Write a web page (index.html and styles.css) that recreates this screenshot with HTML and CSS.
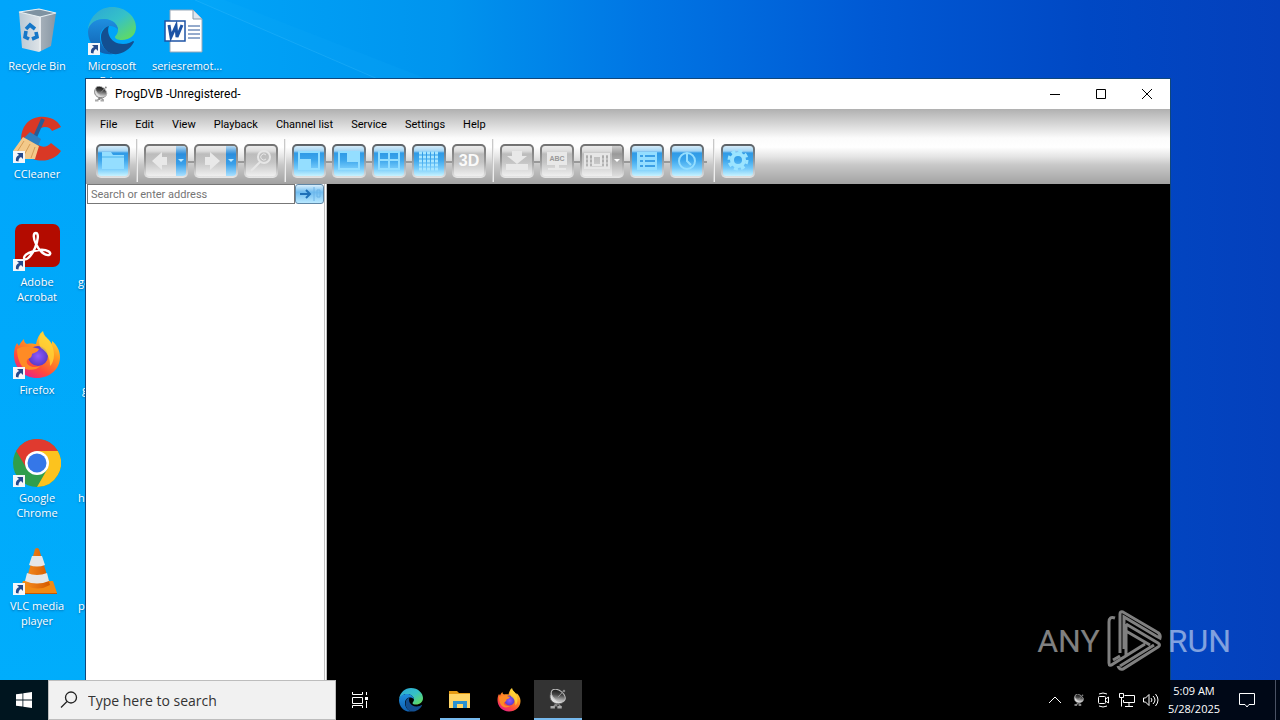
FILE: index.html
```html
<!DOCTYPE html>
<html lang="en">
<head>
<meta charset="utf-8">
<title>ProgDVB</title>
<link rel="stylesheet" href="styles.css">
</head>
<body>
<svg class="defs" aria-hidden="true">
  <defs>
    <linearGradient id="edgeTop" x1="0" y1="0" x2="1" y2="1"><stop offset="0" stop-color="#2aa5d8"/><stop offset=".5" stop-color="#35c1c8"/><stop offset="1" stop-color="#6be04a"/></linearGradient>
    <linearGradient id="edgeLeft" x1="0" y1="0" x2="0" y2="1"><stop offset="0" stop-color="#1f8fe0"/><stop offset="1" stop-color="#0f5fae"/></linearGradient>
    <linearGradient id="ffBody" x1=".9" y1="0" x2=".3" y2="1"><stop offset="0" stop-color="#fff04a"/><stop offset=".4" stop-color="#ff9a1f"/><stop offset=".75" stop-color="#ff4b3a"/><stop offset="1" stop-color="#e8208a"/></linearGradient>
    <radialGradient id="ffCore"><stop offset="0" stop-color="#9059ff"/><stop offset="1" stop-color="#5b3ac8"/></radialGradient>
    <linearGradient id="binSide" x1="0" y1="0" x2="1" y2="0"><stop offset="0" stop-color="#b9c8d4"/><stop offset=".58" stop-color="#dfe4e8"/><stop offset=".6" stop-color="#a4afb9"/><stop offset="1" stop-color="#8796a3"/></linearGradient>
    <linearGradient id="cone" x1="0" y1="0" x2="1" y2="0"><stop offset="0" stop-color="#f58a1c"/><stop offset="1" stop-color="#d45a00"/></linearGradient>
    <linearGradient id="dish" x1="0" y1="0" x2="1" y2="1"><stop offset="0" stop-color="#000"/><stop offset=".45" stop-color="#444"/><stop offset="1" stop-color="#fff"/></linearGradient>
  </defs>
  <symbol id="shortcut" viewBox="0 0 12 12">
    <rect width="12" height="12" fill="#f4f6fa"/>
    <path d="M4 2h6v6L8 6C6 7 5.500 8.500 5.500 10.500L3 10C2.500 7 3.500 5 6 4z" fill="#264a8c"/>
  </symbol>
  <symbol id="edge" viewBox="0 0 48 48">
    <path d="M0 22C2 9 12 0 24 0c14 0 24 10 24 20 0 8-6 13-14 13-4 0-7-1-7-3 0-1 3-3 3-7 0-6-6-11-14-11C9 12 3 16 0 22z" fill="url(#edgeTop)"/>
    <path d="M0 24C1 16 8 12 16 12c8 0 14 5 14 11-2-3-5-4-8-4-6 0-10 5-10 11 0 8 6 15 13 17C11 49 0 38 0 24z" fill="url(#edgeLeft)"/>
    <path d="M13 30c0-6 4-10 8-11-3 7 2 18 14 18 5 0 8-2 10-3 1 0 1 1 1 1-4 8-13 13-21 12-8-2-12-9-12-17z" fill="#134f91"/>
  </symbol>
  <symbol id="firefox" viewBox="0 0 48 48">
    <path d="M24 47C11 47 1 37 1 24c0-5 1-9 3-12l2 3c1-3 3-5 5-7 0 3 1 4 3 5 4-1 7 0 9 0 1-5 3-10 7-13 1 5 4 7 6 9l3 4v-3c5 4 8 10 8 16 0 12-10 21-23 21z" fill="url(#ffBody)"/>
    <circle cx="25" cy="25" r="10" fill="url(#ffCore)"/>
    <path d="M4 18c5-3 9-3 13-2 4 0 6 1 9 2-1 3-5 4-7 5 0 4-3 4-5 6-2 5 6 9 13 6-5 6-17 5-20-3-2-4-3-9-3-14z" fill="#ff8b25"/>
    <path d="M28 2c8 6 13 12 13 22 0 5-2 9-4 11 0-9-3-14-9-18-3-4-2-10 0-15z" fill="#ffd838" opacity=".75"/>
  </symbol>
  <symbol id="satellite" viewBox="0 0 16 16">
    <path d="M7 10l-3 4h3l1-2 1 2h2z" fill="#888"/>
    <path d="M2 14.500h3.500M7.500 14.500H11" stroke="#aaa" stroke-width="2"/>
    <path d="M3 2C0 6 2 11 7 11.800c4 .4 6-1.300 6.500-3.800z" fill="#ddd" stroke="#555" stroke-width=".7"/>
    <ellipse cx="8.200" cy="5.200" rx="6.400" ry="4" transform="rotate(38 8.200 5.200)" fill="url(#dish)" stroke="#bbb" stroke-width=".8"/>
    <path d="M8 6.500l4.500-5" stroke="#999" stroke-width=".8" fill="none"/>
    <circle cx="12.800" cy="1.500" r="1" fill="#888"/>
  </symbol>
</svg>

<main class="desktop">
  <svg class="rays" viewBox="0 0 1280 720" preserveAspectRatio="none" aria-hidden="true"><path d="M195 0L380 80H430L225 0z" fill="#2cc0ff" opacity=".08"/><path d="M195 0L380 80" stroke="#4cc6ff" opacity=".25"/></svg>

  <section class="icons" aria-label="Desktop">
    <a class="item" href="#bin"><svg class="pic" viewBox="0 0 48 48">
      <path d="M6 5L26 2l17 4-5 33-12 6-17-4z" fill="url(#binSide)"/>
      <path d="M6 5l20-3 17 4-16 4z" fill="#7f93a2" stroke="#e8f0f4" stroke-width="1.200"/>
      <path d="M27 10v34" stroke="#eef2f5"/>
      <g fill="none" stroke="#1677c8" stroke-width="3.600"><path d="M13 22l4-4 5 4M23 25l1 5-5 2M16 32l-4-2 1-6"/></g>
    </svg><span>Recycle Bin</span></a>
    <a class="item" href="#ccleaner"><svg class="pic" viewBox="0 0 48 48">
      <path d="M48 12C42 0 22-2 13 9S8 40 20 44c11 4 23 0 28-8l-10-8c-4 5-12 5-15-1-3-7 2-15 9-15 4 0 6 2 7 4z" fill="#d93825"/>
      <path d="M30 4l-8 18" stroke="#2a5b94" stroke-width="4"/>
      <path d="M17 17l11 7-3 7-14-8z" fill="#2f7fc0"/>
      <path d="M10 22l16 9-4 13H8c-2-1-5-5-8-8z" fill="#f3c98a"/><path d="M11 26L4 37M17 29l-7 13M22 32l-4 11" stroke="#d49c58"/>
    </svg><svg class="badge"><use href="#shortcut"/></svg><span>CCleaner</span></a>
    <a class="item" href="#acrobat"><svg class="pic" viewBox="0 0 48 48">
      <rect x="2" y="1" width="45" height="43" rx="7" fill="#b30b00"/>
      <path d="M23 10c-3 0-3 5 0 11 3 7 9 12 13 11 4-2-2-6-10-5-7 1-15 4-15 8 1 4 7-1 11-10 3-7 4-15 1-15z" fill="none" stroke="#fff" stroke-width="2.400"/>
    </svg><svg class="badge"><use href="#shortcut"/></svg><span>Adobe Acrobat</span></a>
    <a class="item" href="#firefox"><svg class="pic"><use href="#firefox"/></svg><svg class="badge"><use href="#shortcut"/></svg><span>Firefox</span></a>
    <a class="item" href="#chrome"><svg class="pic" viewBox="0 0 48 48">
      <circle cx="24" cy="24" r="24" fill="#2f9e4c"/>
      <path d="M3.200 12A24 24 0 0 1 44.800 12H24L14 30z" fill="#e03a2f"/>
      <path d="M44.800 12A24 24 0 0 1 24 48L34.400 30 24 12z" fill="#fcc31e"/>
      <circle cx="24" cy="24" r="12" fill="#fff"/><circle cx="24" cy="24" r="9.500" fill="#3577e8"/>
    </svg><svg class="badge"><use href="#shortcut"/></svg><span>Google Chrome</span></a>
    <a class="item" href="#vlc"><svg class="pic" viewBox="0 0 48 48">
      <path d="M10 34h30l4 12H5z" fill="#f28a14"/><path d="M5 46h39v1H5z" fill="#c85800"/>
      <path d="M22 2q2-2 4 0l11 36q-12 7-25 0z" fill="url(#cone)"/>
      <path d="M19 9h10l3 9q-8 3-16 0zM14 26q10 4 20 0l2 8q-12 5-24 0z" fill="#e6e6e6"/>
    </svg><svg class="badge"><use href="#shortcut"/></svg><span>VLC media player</span></a>

    <a class="item" href="#edge"><svg class="pic"><use href="#edge"/></svg><svg class="badge"><use href="#shortcut"/></svg><span>Microsoft Edge</span></a>
    <span class="item"></span>
    <a class="item covered" href="#g1"><span>ga</span></a>
    <a class="item covered far" href="#g2"><span>g</span></a>
    <a class="item covered" href="#h1"><span>he</span></a>
    <a class="item covered" href="#p1"><span>pa</span></a>

    <a class="item" href="#series"><svg class="pic" viewBox="0 0 48 48">
      <path d="M7 3h23l9 9v33H7z" fill="#fff" stroke="#98a8b8"/><path d="M30 3v9h9" fill="#dfe6ee" stroke="#8899aa"/>
      <path d="M25 19h12M25 23h12M25 27h12M25 31h12" stroke="#2b579a"/>
      <rect x="2" y="14" width="20" height="20" fill="#fff" stroke="#1d53a5" stroke-width="1.500"/>
      <path d="M6 18l2 12 5-11 1 11 5-12" fill="none" stroke="#1d53a5" stroke-width="3"/>
    </svg><span>seriesremot...</span></a>
  </section>

  <section class="window" aria-label="ProgDVB">
    <header class="titlebar">
      <svg class="appicon"><use href="#satellite"/></svg>
      <h1>ProgDVB -Unregistered-</h1>
      <button aria-label="Minimize"><svg viewBox="0 0 10 10"><path d="M0 5.500h10"/></svg></button>
      <button aria-label="Maximize"><svg viewBox="0 0 10 10"><path d="M.5 .5h9v9h-9z"/></svg></button>
      <button aria-label="Close"><svg viewBox="0 0 10 10"><path d="M0 0l10 10M10 0L0 10"/></svg></button>
    </header>
    <div class="chrome">
      <nav class="menu"><button>File</button><button>Edit</button><button>View</button><button>Playback</button><button>Channel list</button><button>Service</button><button>Settings</button><button>Help</button></nav>
      <div class="toolbar">
        <div class="group"><button class="tool" aria-label="Open"><svg viewBox="0 0 30 30"><path class="f" d="M4 6h9l2 3h11v14H4z"/><path d="M4 11h22" stroke="#4ab4ee"/></svg></button></div>
        <i class="sep"></i>
        <div class="group">
          <button class="tool off wide" aria-label="Back"><svg viewBox="0 0 30 30"><path class="f" d="M6 15l10-9v5h5v8h-5v5z"/></svg><b class="drop"></b></button>
          <button class="tool off wide" aria-label="Forward"><svg viewBox="0 0 30 30"><path class="f" d="M24 15l-10-9v5H9v8h5v5z"/></svg><b class="drop"></b></button>
          <button class="tool off" aria-label="Find"><svg viewBox="0 0 30 30"><circle class="s" cx="18" cy="11" r="6"/><path class="s" d="M14 16l-9 9"/><path class="s thin" d="M20 9a3 3 0 1 0 0 4"/></svg></button>
        </div>
        <i class="sep"></i>
        <div class="group">
          <button class="tool" aria-label="Full size"><svg viewBox="0 0 30 30"><path class="s" d="M5 6h20v17H5z"/><path class="f" d="M5 13h12v10H5z"/></svg></button>
          <button class="tool" aria-label="Picture in picture"><svg viewBox="0 0 30 30"><path class="s" d="M5 6h20v17H5z"/><path class="f" d="M13 6h12v10H13z"/></svg></button>
          <button class="tool" aria-label="Mosaic"><svg viewBox="0 0 30 30"><path class="s" d="M5 6h20v17H5zM15 6v17M5 14h20"/></svg></button>
          <button class="tool" aria-label="Grid"><svg viewBox="0 0 30 30"><path class="dots" d="M5 7h20M5 11h20M5 15h20M5 19h20M5 23h20"/></svg></button>
          <button class="tool off three">3D</button>
        </div>
        <i class="sep"></i>
        <div class="group tail">
          <button class="tool off" aria-label="Record"><svg viewBox="0 0 30 30"><path class="f" d="M10 5h10v5h5l-10 8-10-8h5zM4 18h22v6H4z"/></svg></button>
          <button class="tool off" aria-label="Teletext"><svg viewBox="0 0 30 30"><path class="f" d="M5 6h20v13h-8v3h7v2H6v-2h7v-3H5z"/><text x="15" y="15" text-anchor="middle" class="abc">ABC</text></svg></button>
          <button class="tool off wide" aria-label="Video"><svg viewBox="0 0 30 30"><path class="s" d="M3 8h24v14H3zM11 10h8v9h-8zM7 9v12M23 9v12"/><path d="M5 10v10M9 10v10M21 10v10M25 10v10" stroke="#999" stroke-dasharray="2"/></svg><b class="drop gray"></b></button>
          <button class="tool" aria-label="List"><svg viewBox="0 0 30 30"><path class="f" d="M5 6h20v18H5z"/><path d="M8 10h3M13 10h10M8 15h3M13 15h10M8 20h3M13 20h10" stroke="#3ca0e6" stroke-width="2"/></svg></button>
          <button class="tool" aria-label="Scheduler"><svg viewBox="0 0 30 30"><circle class="s" cx="15" cy="15" r="8"/><path class="s" d="M15 8v7l4 4"/></svg></button>
        </div>
        <i class="sep"></i>
        <div class="group"><button class="tool" aria-label="Settings"><svg viewBox="0 0 30 30"><circle cx="15" cy="14" r="6" fill="none" stroke="#9be4ff" stroke-width="4"/><circle cx="15" cy="14" r="9" fill="none" stroke="#9be4ff" stroke-width="3" stroke-dasharray="4 3.070"/></svg></button></div>
      </div>
    </div>
    <div class="content">
      <aside class="side">
        <form class="find"><input type="text" aria-label="Address" placeholder="Search or enter address"><button type="button" aria-label="Go"><svg viewBox="0 0 26 16"><path d="M4 8h10M10 4l4 4-4 4" fill="none" stroke="#1f70b8" stroke-width="2"/><path d="M18 1v14M21 4h3v7h-3z" fill="none" stroke="#6db4e8"/></svg></button></form>
      </aside>
      <div class="video"></div>
    </div>
  </section>

  <div class="brand"><span>ANY</span><svg viewBox="0 0 56 62"><path d="M14 43V4Q14 1 17 2L51 22Q55 24 54 28L50 26 18 7V39M9 8Q3 6 3 12V53Q3 57 7 54L39 34M7 50L14 46M20 14V45M20 14L52 33Q55 35 52 37L17 59Q13 60 12 56M20 21L44 35M14 56L48 35" fill="none" stroke="#fff" stroke-width="3"/></svg><span>RUN</span></div>

  <footer class="taskbar">
    <button class="start" aria-label="Start"><svg viewBox="0 0 16 16"><path d="M0 2.300L6.500 1.400V7.600H0zM7.300 1.300L16 0V7.600H7.300zM0 8.400H6.500V14.600L0 13.700zM7.300 8.400H16V16L7.300 14.700z" fill="#fff"/></svg></button>
    <label class="search"><svg viewBox="0 0 18 18"><circle cx="11" cy="6.500" r="5.500"/><path d="M7 10.500L1 16.500"/></svg><input type="text" aria-label="Search" placeholder="Type here to search"></label>
    <div class="apps">
      <button class="views" aria-label="Task view"><svg class="line small" viewBox="0 0 16 16"><path d="M.5 0v2.500h10V0M.5 5.500h10v6H.5zM.5 16v-2.500h10V16M14.500 0v3M14.500 9v7"/><path d="M13 5h3v3h-3z" fill="#fff" stroke="none"/></svg></button>
      <button aria-label="Edge"><svg><use href="#edge"/></svg></button>
      <button class="running" aria-label="File Explorer"><svg viewBox="0 0 24 24"><path d="M1 3h8l2 2h11v4H1z" fill="#e59b14"/><path d="M1 6h21v14H1z" fill="#ffd567"/><path d="M5 20v-7h14v7h-4v-4H9v4z" fill="#2c92d0"/></svg></button>
      <button aria-label="Firefox"><svg><use href="#firefox"/></svg></button>
      <button class="active" aria-label="ProgDVB"><svg class="mid"><use href="#satellite"/></svg></button>
    </div>
    <div class="tray">
      <button aria-label="Show hidden icons"><svg class="line" viewBox="0 0 16 16"><path d="M2 11l6-6 6 6"/></svg></button>
      <button aria-label="ProgDVB tray"><svg class="dim"><use href="#satellite"/></svg></button>
      <button aria-label="Camera"><svg class="line" viewBox="0 0 16 16"><rect x="3.500" y="4.500" width="7" height="7" rx="1"/><path d="M10.500 7l3-2v6l-3-2M4 2q4-2 8 0M4 14q4 2 8 0"/></svg></button>
      <button aria-label="Network"><svg class="line" viewBox="0 0 16 16"><path d="M5.500 3.500h10v7h-11V8M10 11v3.500M6 14.500h8M.5 1.500h4v4h-4zM2.500 5.500v9"/></svg></button>
      <button aria-label="Volume"><svg class="line" viewBox="0 0 16 16"><path d="M.5 6h2L6 2.500v11L2.500 10h-2zM8 6q2 2 0 4M10 4q4 4 0 8M12.500 2q5 6 0 12"/></svg></button>
      <time><span>5:09 AM</span><span>5/28/2025</span></time>
      <button class="notify" aria-label="Notifications"><svg class="line" viewBox="0 0 16 16"><path d="M.5 1.500h15v11H10L8 15l-2-2.500H.5z"/></svg></button>
    </div>
  </footer>
</main>
</body>
</html>
```

FILE: styles.css
```css
* { box-sizing: border-box; }
body { margin: 0; font-family: "Open Sans", "Noto Sans", sans-serif; font-size: 11px; }
button { border: 0; padding: 0; background: none; font: inherit; color: inherit; }
input { font: inherit; min-width: 0; }
svg { display: block; }
a { color: inherit; text-decoration: none; }
.defs { position: absolute; width: 0; height: 0; }

.desktop {
  position: relative; height: 100vh; overflow: hidden;
  display: flex; flex-direction: column; justify-content: space-between;
  background: linear-gradient(rgba(0, 200, 255, 0), rgba(0, 200, 255, .24)) 0 0 / 90px 100% no-repeat,
    linear-gradient(90deg, #00a5fb 0%, #00a4f8 16%, #0094ee 35%, #0076e4 50%, #0059d4 68%, #0048c4 85%, #0440bc 100%);
}
.rays { position: absolute; inset: 0; width: 100%; height: 100%; }

.icons {
  position: relative; display: grid; grid-auto-flow: column;
  grid-template-rows: repeat(6, 108px); grid-auto-columns: 74px; column-gap: 1px;
}
.item {
  position: relative; display: flex; flex-direction: column; align-items: center; gap: 3px;
  padding-top: 7px; color: #fff; text-align: center; line-height: 15px;
  text-shadow: 0 1px 2px rgba(0, 40, 90, .5);
}
.item span { max-width: 74px; padding: 0 6px; }
.item:last-child span, .item:first-child span { padding: 0; }
.pic { width: 48px; height: 48px; }
.badge { position: absolute; left: 13px; top: 43px; width: 12px; height: 12px; }
.item.covered { align-items: flex-start; padding-top: 58px; }
.covered span { padding: 0 3px; }
.covered.far span { padding: 0 7px; }

.window {
  position: absolute; left: 85px; right: 109px; top: 78px; bottom: 0;
  display: flex; flex-direction: column; border: 1px solid #10477c; border-bottom: 0; background: #000;
}
.titlebar { display: flex; align-items: center; height: 30px; background: #fff; }
.titlebar h1 { flex: 1; margin: 0 0 0 6px; font: 12px Roboto, sans-serif; }
.titlebar button { width: 46px; height: 28px; display: grid; place-items: center; }
.titlebar button svg { width: 10px; height: 10px; fill: none; stroke: #000; }
.appicon { width: 16px; height: 16px; margin-left: 7px; }

.chrome { background: linear-gradient(#b0b0b0 0, #d4d4d4 14px, #fbfbfb 29px, #fff 38px, #e4e4e4 48px, #c8c8c8 56px, #a2a2a2 75px); }
.menu { display: flex; gap: 18px; height: 30px; padding-left: 14px; align-items: center; font: 11px Roboto, sans-serif; }
.toolbar { display: flex; align-items: center; height: 45px; padding: 0 0 2px 10px; }
.group { display: flex; gap: 6px; background: linear-gradient(#999, #999) 0 17px / 100% 2px no-repeat; }
.tail { padding-right: 3px; }
.sep { width: 2px; height: 43px; margin: 0 6px; border-left: 1px solid #c8c8c8; border-right: 1px solid #eee; }
.tool {
  width: 34px; height: 34px; display: flex; overflow: hidden; border: 2px solid transparent; border-radius: 5px;
  background: linear-gradient(#d5ebf8 0, #a4d5f4 5px, #2f9ae6 7px, #3ca6ec 14px, #70c8fa 22px, #c6f2ff 30px) padding-box,
    linear-gradient(#5b6064, #8e9ba5 50%, #e4e4e4) border-box;
}
.tool svg { width: 30px; height: 30px; flex: none; }
.tool .f { fill: #94deff; }
.tool .s { fill: none; stroke: #94deff; stroke-width: 2; }
.tool .thin { stroke-width: 1; }
.dots { stroke: #a8e6ff; stroke-width: 3; stroke-dasharray: 3 1; }
.off {
  background: linear-gradient(#ececec 0, #dcdcdc 5px, #bcbcbc 8px, #c4c4c4 16px, #efefef 30px) padding-box,
    linear-gradient(#707070, #9a9a9a 50%, #e8e8e8) border-box;
}
.off .f { fill: #e8e8e8; }
.off .s { stroke: #e6e6e6; }
.wide { width: 44px; }
.drop { flex: 1; display: grid; place-items: center; background: linear-gradient(#b6d8f0 0, #2b8ddc 8px, #3aa0ea 18px, #a8e0ff); }
.drop::after { content: ""; border: 3px solid transparent; border-top-color: #b9e8ff; border-bottom: 0; }
.drop.gray { background: linear-gradient(#d0d0d0, #999 8px, #ddd); }
.drop.gray::after { border-top-color: #fff; }
.three { align-items: center; justify-content: center; font: bold 16px "Liberation Sans", sans-serif; color: #fafafa; }
.abc { font: bold 7px "Liberation Sans", sans-serif; fill: #999; }

.content { flex: 1; display: flex; }
.side { width: 241px; background: #fff; border-right: 3px double #c0c0c0; }
.find { display: flex; height: 20px; padding-left: 1px; }
.find input { flex: 1; border: 1px solid #777; padding: 0 3px; font: 11px Roboto, sans-serif; }
.find input::placeholder { color: #757575; }
.find button { width: 29px; border: 1px solid #5f86a5; border-radius: 3px; background: linear-gradient(#d8eefb, #6fbcf0 40%, #b8e8ff); }
.find svg { width: 26px; height: 16px; }
.video { flex: 1; background: #000; }

.brand {
  position: absolute; right: 49px; bottom: 48px; display: flex; align-items: center; gap: 6px;
  font: 32px Roboto, sans-serif; color: #fff; opacity: .5;
}
.brand svg { width: 56px; height: 62px; }

.taskbar { position: relative; display: flex; height: 40px; background: rgba(0, 0, 0, .88); color: #fff; }
.start { width: 48px; display: grid; place-items: center; }
.start svg { width: 16px; height: 16px; }
.search { width: 288px; display: flex; align-items: center; gap: 10px; padding-left: 11px; background: #f1f1f1; border: 1px solid #bdbdbd; }
.search svg { width: 18px; height: 18px; fill: none; stroke: #222; stroke-width: 1.3; }
.search input { flex: 1; border: 0; padding: 0; background: none; font-size: 14px; }
.search input::placeholder { color: #333; }
.apps { display: flex; flex: 1; gap: 1px; }
.apps button { width: 48px; display: grid; place-items: center; }
.apps .views { width: 50px; padding-right: 2px; }
.apps svg { width: 24px; height: 24px; }
.apps .small { width: 16px; height: 16px; }
.apps .mid { width: 20px; height: 20px; }
.running { background: linear-gradient(#76b9ed, #76b9ed) 50% 100% / 40px 2px no-repeat; }
.active { background: #333; border-bottom: 2px solid #76b9ed; }
.line { fill: none; stroke: #fff; stroke-width: 1; }
.tray { display: flex; align-items: center; padding-right: 4px; }
.tray button { width: 24px; display: grid; place-items: center; }
.tray svg { width: 16px; height: 16px; }
.tray .dim { width: 12px; height: 12px; }
.tray time { display: flex; flex-direction: column; align-items: center; width: 62px; line-height: 18px; }
.tray .notify { width: 50px; padding-right: 6px; }
.tray::after { content: ""; align-self: stretch; border-left: 1px solid #4a5264; }
```
